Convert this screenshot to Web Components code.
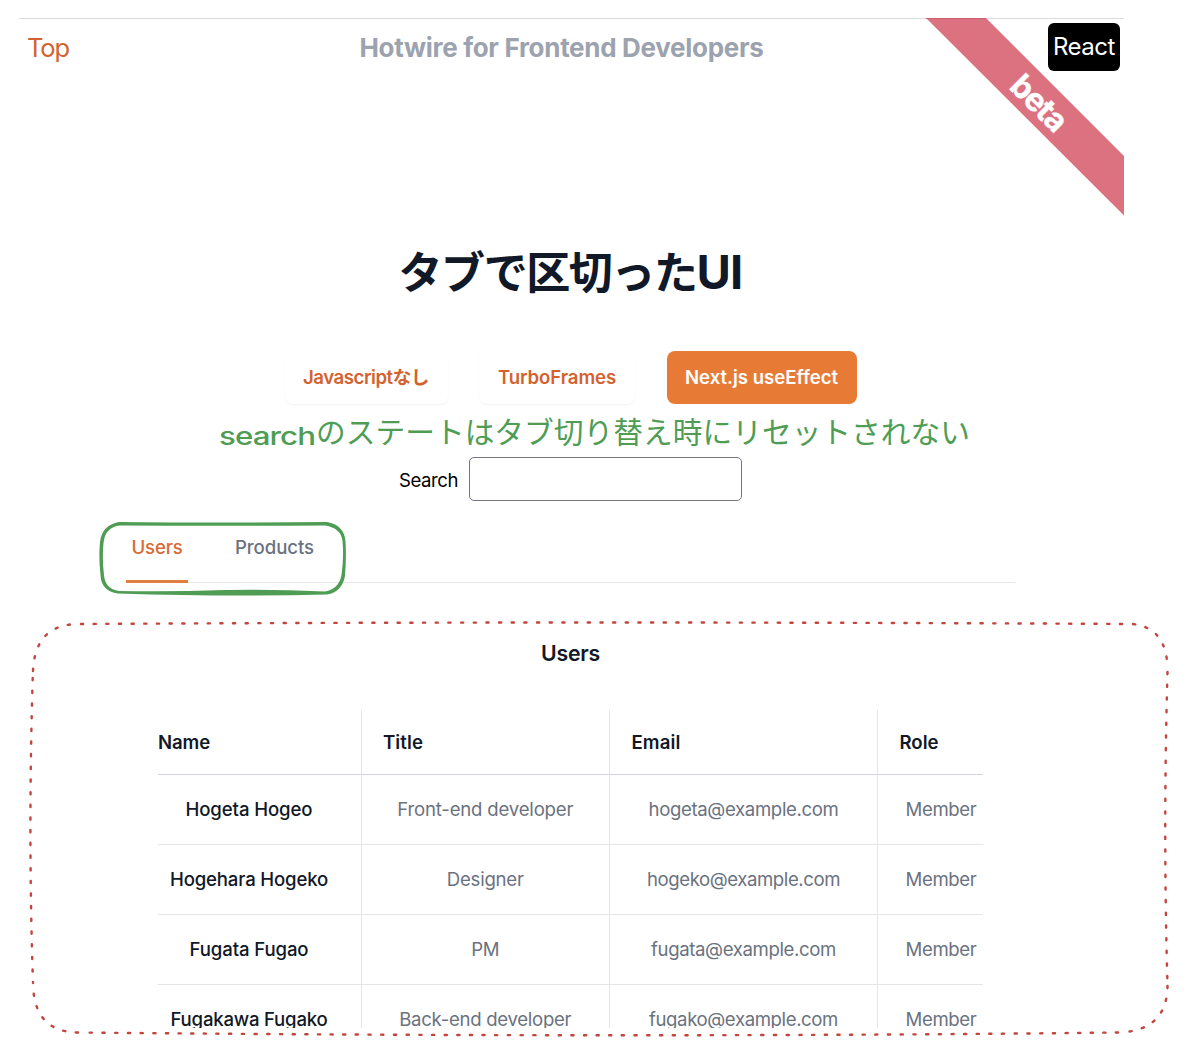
<!DOCTYPE html>
<html lang="ja">
<head>
<meta charset="utf-8">
<title>Hotwire for Frontend Developers</title>
<style>
  html, body { margin: 0; background: #fff; }
  body { font-family: Inter, "Noto Sans CJK JP", sans-serif; color: #111827; overflow: hidden; }
</style>
</head>
<body>
<demo-page></demo-page>
<script>
const define = (name, html, setup) => customElements.define(name, class extends HTMLElement {
  constructor() {
    super();
    this.attachShadow({ mode: 'open' }).innerHTML = html;
  }
  connectedCallback() { if (setup) setup(this, this.shadowRoot); }
});

// Tracks its text so that the line has the width given in "w".
define('fit-text', `<style>
  :host { display: inline-block; white-space: nowrap; line-height: 1; }
</style><span><slot></slot></span>`, (el) => {
  const target = parseFloat(el.getAttribute('w'));
  const natural = el.shadowRoot.querySelector('span').getBoundingClientRect().width;
  const spacing = (target - natural) / el.textContent.length;
  el.style.letterSpacing = spacing + 'px';
});

define('site-header', `<style>
  :host { display: grid; grid-template-columns: 340.500px 1fr 76px; align-items: center; height: 57px; flex-shrink: 0;
    border-top: 1px solid #dcdde0; box-sizing: border-box; }
  a { color: #d3622f; font-size: 25.5px; padding-left: 8px; }
  b { color: #9ca3af; font-size: 26px; font-weight: 700; }
  .react { background: #000; color: #fff; width: 72px; height: 48px; border-radius: 6px; font-size: 24px;
    display: flex; align-items: center; justify-content: center; z-index: 3; }
</style>
<a><fit-text w="42">Top</fit-text></a>
<b><fit-text w="404">Hotwire for Frontend Developers</fit-text></b>
<div class="react"><fit-text w="62">React</fit-text></div>`);

define('beta-ribbon', `<style>
  :host { position: absolute; right: 0; top: 0; width: 198px; height: 198px; z-index: 2; }
  svg { display: block; }
  text { font: 700 32px Inter, sans-serif; fill: #fff; stroke: #fff; stroke-width: .4px; }
</style>
<svg width="198" height="198" viewBox="0 0 198 198">
  <path d="M0 0H60L198 138V197.500Z" fill="#dc717f"/>
  <path d="M0 .5H60" stroke="#c9606f"/>
  <text transform="translate(112.500 86) rotate(45)" text-anchor="middle" y="10" textLength="66">beta</text>
</svg>`);

define('nav-pill', `<style>
  :host { display: flex; align-items: center; justify-content: center; height: 53px; border-radius: 8px;
    box-sizing: border-box; color: #d3622f; font-size: 18.6px; font-weight: 600; box-shadow: 0 1px 2px rgba(0,0,0,.05); }
  :host([active]) { background: #e77b36; color: #fff; box-shadow: none; }
</style><slot></slot>`);

define('search-field', `<style>
  :host { display: flex; align-items: center; gap: 11px; color: #000; font-size: 18.6px; }
  label { padding-top: 2px; }
  input { box-sizing: border-box; width: 273px; height: 44px; border: 1px solid #747482; border-radius: 5px; margin: 0; padding: 0 12px; background: #fff; }
</style><label for="q"><slot></slot></label><input id="q" type="text">`);

define('tab-item', `<style>
  :host { display: flex; justify-content: center; box-sizing: border-box; height: 47px; padding-top: 2px;
    font-size: 18.6px; font-weight: 500; color: #6b7280; }
  :host([active]) { color: #d96a33; border-bottom: 3px solid #df8040; }
</style><slot></slot>`);

define('tab-bar', `<style>
  :host { display: flex; gap: 42px; height: 46px; border-bottom: 1px solid #e5e7eb; }
</style><slot></slot>`);

define('user-table', `<style>
  :host { display: grid; grid-template-columns: 203.500px 248.500px 268px 105px; grid-template-rows: 65px repeat(4, 70px); font-size: 18.600px; }
  div { box-sizing: border-box; display: flex; align-items: center; justify-content: center;
    border-bottom: 1px solid #e4e6e9; border-right: 1px solid #e4e6e9; color: #6b7280; }
  .h { justify-content: flex-start; padding-left: 21.500px; font-weight: 600; color: #111827; border-bottom-color: #d1d5db; }
  .n { font-weight: 500; color: #111827; padding-right: 20.500px; }
  .h.first { padding-left: 0; }
  .last { border-right: 0; }
  .r { padding-left: 21px; }
</style>`, (el, root) => {
  const heads = [['Name', 52], ['Title', 40], ['Email', 49], ['Role', 39]];
  const rows = [
    [['Hogeta Hogeo', 127], ['Front-end developer', 176], ['hogeta@example.com', 190], ['Member', 71]],
    [['Hogehara Hogeko', 158], ['Designer', 77], ['hogeko@example.com', 193], ['Member', 71]],
    [['Fugata Fugao', 119], ['PM', 28], ['fugata@example.com', 185], ['Member', 71]],
    [['Fugakawa Fugako', 157], ['Back-end developer', 172], ['fugako@example.com', 189], ['Member', 71]]
  ];
  const cell = ([text, w], cls) => `<div class="${cls}"><fit-text w="${w}">${text}</fit-text></div>`;
  root.innerHTML += heads.map((c, i) => cell(c, 'h' + (i === 0 ? ' first' : '') + (i === 3 ? ' last' : ''))).join('') +
    rows.map(r => r.map((c, i) => cell(c, ['n', '', '', 'r last'][i])).join('')).join('');
});

define('green-note', `<style>
  :host { position: absolute; left: 219px; top: 418px; display: flex; align-items: baseline; color: #4f9d54; font-size: 29.7px; z-index: 4; }
  .hand { width: 97px; font-size: 26px; font-weight: 500; transform-origin: 0 80%; transform: translateY(2px) scale(1.2, .95); }
</style>
<span class="hand"><fit-text w="97">search</fit-text></span><fit-text w="654">のステートはタブ切り替え時にリセットされない</fit-text>`);

define('sketch-overlay', `<style>
  :host { position: absolute; inset: 0; pointer-events: none; z-index: 5; }
  svg { display: block; }
</style>
<svg width="1188" height="1048" viewBox="0 0 1188 1048" fill="none">
  <path fill="#4f9d54" fill-rule="evenodd" d="M119 522Q220 523 327 522Q344 525 345.500 541Q346.500 558 345 576Q342 592 327 594.500Q230 597 118 593.500Q101 591 100.500 575Q98.500 557 100 542Q102 525 119 522Z M120 525.500Q105 527 103.500 543Q102 559 104 575Q105 589 119 591Q170 592 225 590Q275 589 325 591.500Q339 589 341.500 575Q344 557 342.500 541Q341 528 325 525.500Q220 526 120 525.500Z"/>
  <g stroke="#c2453e" stroke-width="2.400" stroke-linecap="round" stroke-dasharray="2.200 10.470">
    <path d="M81 624Q590 621 1132 624"/>
    <path d="M1133 624Q1167 628 1167.500 669"/>
    <path d="M1167.500 672Q1163 830 1167.500 985"/>
    <path d="M1167.500 986Q1167 1030 1120 1032.500"/>
    <path d="M1118 1032.500Q650 1038 80 1032.500"/>
    <path d="M78 1032.500Q34 1032 33 984"/>
    <path d="M32.700 678Q28 835 33 983"/>
    <path d="M33 671Q35 624 79 624"/>
  </g>
</svg>`);

define('demo-page', `<style>
  :host { display: block; position: relative; width: 1188px; height: 1048px; overflow: hidden; background: #fff; }
  main { margin: 18px 0 0 19px; width: 1105px; height: 1010px; overflow: hidden; position: relative; display: flex; flex-direction: column; }
  main > * { flex-shrink: 0; }
  h1 { margin: 173px 2px 0 0; height: 48px; display: flex; justify-content: center; align-items: baseline; font-size: 47px; font-weight: 700; color: #111827; }
  h1 .ja { font-size: 44px; }
  nav { display: grid; grid-template-columns: 163px 156px 190px; gap: 31.500px; justify-content: center; margin: 55px 2px 0 0; }
  search-field { align-self: center; margin: 53px 2px 0 0; }
  tab-bar { margin: 35px 109px 0 107px; }
  tab-item:first-child { width: 62px; }
  h2 { margin: 57px 2px 0 0; text-align: center; font-size: 21.300px; line-height: 26px; font-weight: 600; }
  user-table { margin: 44px 0 0 139px; }
</style>
<main>
  <site-header></site-header>
  <beta-ribbon></beta-ribbon>
  <h1><fit-text class="ja" w="298">タブで区切った</fit-text><fit-text w="46">UI</fit-text></h1>
  <nav>
    <nav-pill><fit-text w="126">Javascriptなし</fit-text></nav-pill>
    <nav-pill><fit-text w="118">TurboFrames</fit-text></nav-pill>
    <nav-pill active><fit-text w="153">Next.js useEffect</fit-text></nav-pill>
  </nav>
  <search-field><fit-text w="59">Search</fit-text></search-field>
  <tab-bar>
    <tab-item active><fit-text w="51">Users</fit-text></tab-item>
    <tab-item><fit-text w="79" style="margin-left:5px">Products</fit-text></tab-item>
  </tab-bar>
  <h2><fit-text w="59">Users</fit-text></h2>
  <user-table></user-table>
</main>
<green-note></green-note>
<sketch-overlay></sketch-overlay>`);
</script>
</body>
</html>
